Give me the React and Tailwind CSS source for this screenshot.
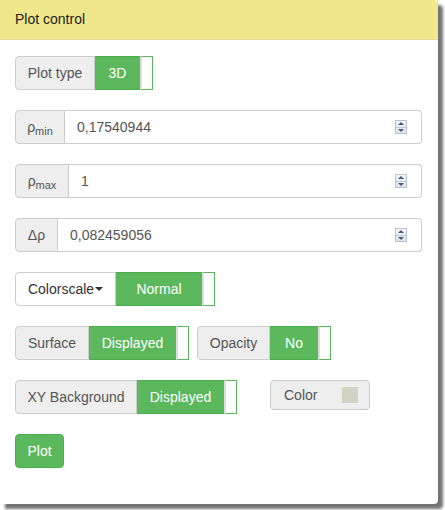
import React from 'react';

function Toggle({ label, value, labelW, valueW, white }) {
  return (
    <div className="flex h-[34px] text-[14px]">
      <div
        className={`flex items-center justify-center rounded-l-[4px] border border-[#ccc] ${white ? 'bg-white text-[#333]' : 'bg-[#eee] text-[#555]'}`}
        style={{ width: labelW }}
      >
        {label}
      </div>
      <div
        className="flex items-center justify-center border-y border-[#4cae4c] bg-[#5cb85c] text-white"
        style={{ width: valueW }}
      >
        {value}
      </div>
      <div className="w-[13px] border border-l-[2px] border-[#5cb85c] border-l-[#ddd] bg-white" />
    </div>
  );
}

function Spinner() {
  return (
    <div className="flex h-[14px] w-[12px] flex-col border border-[#b9c2cf] bg-gradient-to-b from-[#f4f6f9] to-[#dde3eb]">
      <div className="flex flex-1 items-center justify-center border-b border-[#c6ccd6]">
        <svg width="6" height="3" viewBox="0 0 6 3"><path d="M0 3 L3 0 L6 3 Z" fill="#4a5a7a" /></svg>
      </div>
      <div className="flex flex-1 items-center justify-center">
        <svg width="6" height="3" viewBox="0 0 6 3"><path d="M0 0 L3 3 L6 0 Z" fill="#4a5a7a" /></svg>
      </div>
    </div>
  );
}

function NumberField({ addon, addonW, value }) {
  return (
    <div className="flex h-[34px] w-[407px] text-[14px] text-[#555]">
      <div
        className="flex items-center justify-center rounded-l-[4px] border border-[#ccc] bg-[#eee]"
        style={{ width: addonW }}
      >
        {addon}
      </div>
      <div className="flex flex-1 items-center justify-between rounded-r-[4px] border border-l-0 border-[#ccc] bg-white pl-3 pr-[14px]">
        <span>{value}</span>
        <Spinner />
      </div>
    </div>
  );
}

function Rho({ sub }) {
  return (
    <span>
      ρ<span className="relative top-[3px] text-[11px]">{sub}</span>
    </span>
  );
}

export default function App() {
  return (
    <div className="h-[510px] w-[445px] bg-white" style={{ fontFamily: '"Liberation Sans", Arial, sans-serif' }}>
      <div className="h-[504px] w-[438px] overflow-hidden rounded-r-[4px] bg-white shadow-[5px_5px_3px_rgba(0,0,0,0.55)]">
        <div className="flex h-[40px] items-center border-b border-[#e2dc9a] bg-[#f0e68c] px-[15px] text-[14px] text-[#222]">
          Plot control
        </div>
        <div className="flex flex-col gap-5 px-[15px] pt-[16px]">
          <Toggle label="Plot type" value="3D" labelW={80} valueW={45} />
          <NumberField addon={<Rho sub="min" />} addonW={50} value="0,17540944" />
          <NumberField addon={<Rho sub="max" />} addonW={54} value="1" />
          <NumberField addon="Δρ" addonW={43} value="0,082459056" />
          <div className="flex">
            <Toggle
              label={
                <span className="flex items-center">
                  Colorscale
                  <svg width="8" height="4" viewBox="0 0 8 4" className="ml-[1px]"><path d="M0 0 L8 0 L4 4 Z" fill="#333" /></svg>
                </span>
              }
              value="Normal"
              labelW={101}
              valueW={86}
              white
            />
          </div>
          <div className="flex gap-2">
            <Toggle label="Surface" value="Displayed" labelW={74} valueW={87} />
            <Toggle label="Opacity" value="No" labelW={73} valueW={48} />
          </div>
          <div className="flex items-start gap-[33px]">
            <Toggle label="XY Background" value="Displayed" labelW={122} valueW={87} />
            <div className="flex h-[30px] w-[100px] items-center justify-between rounded-[4px] border border-[#ccc] bg-[#eee] pl-[13px] pr-[11px] text-[14px] text-[#555]">
              <span>Color</span>
              <span className="h-[16px] w-[16px] bg-[#d3d3c3]" />
            </div>
          </div>
          <div>
            <button className="h-[34px] w-[49px] rounded-[4px] border border-[#4cae4c] bg-[#5cb85c] text-[14px] text-white">
              Plot
            </button>
          </div>
        </div>
      </div>
    </div>
  );
}
